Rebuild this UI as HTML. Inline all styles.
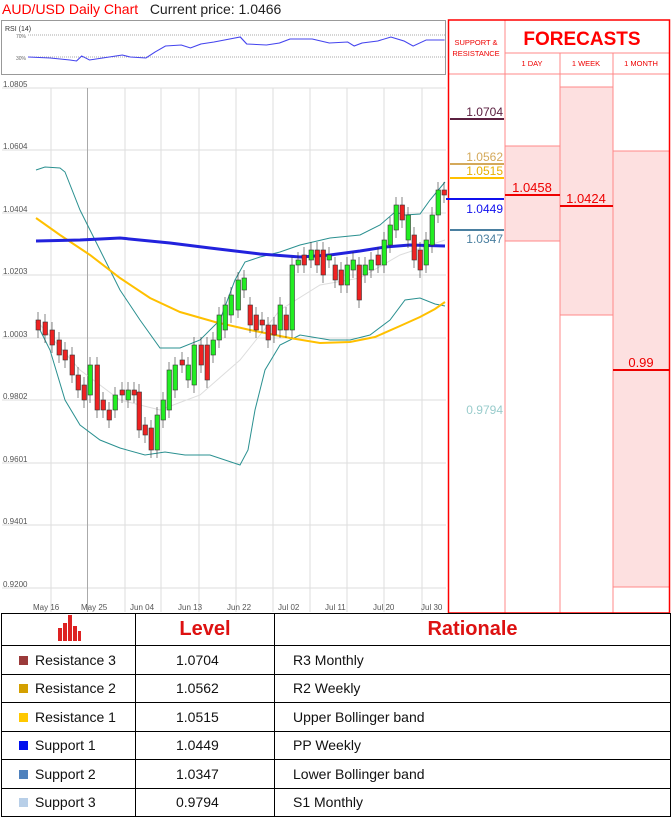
<!DOCTYPE html>
<html><head><meta charset="utf-8"><style>
body{margin:0;width:672px;height:821px;background:#fff;font-family:"Liberation Sans",sans-serif;position:relative;overflow:hidden}
.a{position:absolute}
table{border-collapse:collapse;position:absolute;left:1px;top:613px;width:670px}
td{border:1.5px solid #000;font-size:14px;height:27.5px;padding:0;color:#111}
.sq{display:inline-block;width:9px;height:9px;margin:0 7px 0 17px;vertical-align:-0px}
</style></head><body>
<div class="a" style="left:2px;top:1px;font-size:14px"><span style="color:#f00">AUD/USD Daily Chart</span>&nbsp;&nbsp;&nbsp;<span style="color:#222">Current price: <b style="font-weight:normal">1.0466</b></span></div>
<svg class="a" style="left:0;top:0" width="672" height="613">
<rect x="1.5" y="20.5" width="444" height="54" fill="#fff" stroke="#999"/>
<text x="5" y="31" font-size="7" fill="#333">RSI (14)</text>
<text x="16" y="38" font-size="5" fill="#666">70%</text><text x="16" y="60" font-size="5" fill="#666">30%</text>
<line x1="28" y1="35" x2="445" y2="35" stroke="#aaa" stroke-dasharray="1,1"/>
<line x1="28" y1="57" x2="445" y2="57" stroke="#aaa" stroke-dasharray="1,1"/>
<polyline fill="none" stroke="#44e" stroke-width="1" transform="translate(28 0) scale(1.31 1) translate(-28 0)" points="28,57 45,58 60,60 65,61 69,56 75,60 90,57 100,55 106,57 118,58 125,52 133,46 145,45 152,48 160,44 170,42 178,40 190,37 195,44 210,45 220,43 228,39 245,39 258,43 272,42 277,46 283,43 295,41 305,37 315,41 322,46 332,40 346,40"/>
<g stroke="#ddd" stroke-width="1">
<line x1="2" y1="88" x2="446" y2="88"/><line x1="2" y1="150" x2="446" y2="150"/><line x1="2" y1="213" x2="446" y2="213"/><line x1="2" y1="275" x2="446" y2="275"/><line x1="2" y1="338" x2="446" y2="338"/><line x1="2" y1="400" x2="446" y2="400"/><line x1="2" y1="463" x2="446" y2="463"/><line x1="2" y1="525" x2="446" y2="525"/><line x1="2" y1="588" x2="446" y2="588"/>
<line x1="51" y1="88" x2="51" y2="612"/><line x1="87.5" y1="88" x2="87.5" y2="612" stroke="#aaa"/><line x1="125" y1="88" x2="125" y2="612"/><line x1="161" y1="88" x2="161" y2="612"/><line x1="199" y1="88" x2="199" y2="612"/><line x1="236" y1="88" x2="236" y2="612"/><line x1="273" y1="88" x2="273" y2="612"/><line x1="310" y1="88" x2="310" y2="612"/><line x1="347" y1="88" x2="347" y2="612"/><line x1="384" y1="88" x2="384" y2="612"/><line x1="422" y1="88" x2="422" y2="612"/>
</g>
<g font-size="8" fill="#555"><text x="3" y="87">1.0805</text><text x="3" y="149">1.0604</text><text x="3" y="212">1.0404</text><text x="3" y="274">1.0203</text><text x="3" y="337">1.0003</text><text x="3" y="399">0.9802</text><text x="3" y="462">0.9601</text><text x="3" y="524">0.9401</text><text x="3" y="587">0.9200</text>
<text x="33" y="610">May 16</text><text x="81" y="610">May 25</text><text x="130" y="610">Jun 04</text><text x="178" y="610">Jun 13</text><text x="227" y="610">Jun 22</text><text x="278" y="610">Jul 02</text><text x="325" y="610">Jul 11</text><text x="373" y="610">Jul 20</text><text x="421" y="610">Jul 30</text></g>
<polyline fill="none" stroke="#ddd" points="36,320 80,370 120,400 160,410 200,395 240,360 280,310 320,285 360,278 400,255 445,240"/>
<polyline fill="none" stroke="#2a9090" points="36,170 45,167 60,168 65,172 80,210 100,250 120,290 140,320 160,348 180,348 200,340 220,320 235,280 245,262 260,257 280,252 300,245 330,238 360,235 380,225 395,212 405,215 420,214 430,200 445,182"/>
<polyline fill="none" stroke="#2a9090" points="36,322 50,350 65,400 80,425 100,440 120,448 145,455 165,452 185,455 210,455 240,465 248,450 255,410 265,370 280,345 300,335 330,340 350,340 370,335 390,320 405,300 420,298 435,304 445,306"/>
<polyline fill="none" stroke="#ffc000" stroke-width="2" points="36,218 60,235 90,255 120,278 150,298 180,312 215,322 250,330 290,338 320,343 350,342 375,337 400,326 420,317 435,309 445,302"/>
<polyline fill="none" stroke="#2222dd" stroke-width="3" points="36,241 80,240 120,238 170,243 210,248 260,254 300,257 330,255 360,251 385,247 410,245 445,246"/>
<g id="c" stroke="#333" stroke-width="0.6"></g>
<rect x="505" y="146" width="55" height="95" fill="#fde0e0"/>
<rect x="560" y="87" width="53" height="228" fill="#fde0e0"/>
<rect x="613" y="151" width="56" height="436" fill="#fde0e0"/>
<g stroke="#f88" stroke-width="1"><line x1="505" y1="146" x2="560" y2="146"/><line x1="505" y1="241" x2="560" y2="241"/><line x1="560" y1="87" x2="613" y2="87"/><line x1="560" y1="315" x2="613" y2="315"/><line x1="613" y1="151" x2="670" y2="151"/><line x1="613" y1="587" x2="670" y2="587"/>
<line x1="505" y1="53" x2="670" y2="53"/><line x1="448" y1="74" x2="670" y2="74"/><line x1="505" y1="20" x2="505" y2="613"/><line x1="560" y1="53" x2="560" y2="613"/><line x1="613" y1="53" x2="613" y2="613"/></g>
<g stroke="#f00" stroke-width="1.5" fill="none"><rect x="448.5" y="20" width="221" height="593"/></g>
<line x1="505" y1="195" x2="560" y2="195" stroke="#e00" stroke-width="2"/>
<line x1="560" y1="206" x2="613" y2="206" stroke="#e00" stroke-width="2"/>
<line x1="613" y1="370" x2="670" y2="370" stroke="#e00" stroke-width="2"/>
<g font-size="13" fill="#e00" text-anchor="middle"><text x="532" y="192">1.0458</text><text x="586" y="203">1.0424</text><text x="641" y="367">0.99</text></g>
<text x="582" y="45" font-size="19" font-weight="bold" fill="#f00" text-anchor="middle">FORECASTS</text>
<g font-size="7.5" fill="#e00" text-anchor="middle"><text x="476" y="45">SUPPORT &amp;</text><text x="476" y="56">RESISTANCE</text><text x="532" y="66">1 DAY</text><text x="586" y="66">1 WEEK</text><text x="641" y="66">1 MONTH</text></g>
<line x1="450" y1="119" x2="504" y2="119" stroke="#5b2040" stroke-width="2"/>
<line x1="450" y1="164" x2="504" y2="164" stroke="#d4a95a" stroke-width="2"/>
<line x1="450" y1="178" x2="504" y2="178" stroke="#ffc000" stroke-width="2"/>
<line x1="446" y1="199" x2="504" y2="199" stroke="#1010ee" stroke-width="2"/>
<line x1="450" y1="230" x2="504" y2="230" stroke="#4a7fa0" stroke-width="2"/>
<g font-size="12" text-anchor="end"><text x="503" y="116" fill="#5b2040">1.0704</text><text x="503" y="161" fill="#d4a95a">1.0562</text><text x="503" y="175" fill="#e8b000">1.0515</text><text x="503" y="213" fill="#1010ee">1.0449</text><text x="503" y="243" fill="#4a7fa0">1.0347</text><text x="503" y="414" fill="#9cc">0.9794</text></g>
</svg>
<script>
var d=[[36,320,330,0],[43,322,335,0],[50,330,345,0],[57,340,355,0],[63,350,360,0],[70,355,375,0],[76,375,390,0],[82,385,400,0],[88,365,395,1],[95,365,410,0],[101,400,410,0],[107,410,420,0],[113,395,410,1],[120,390,395,0],[126,390,400,1],[132,390,395,0],[137,392,430,0],[143,425,435,0],[149,428,450,0],[155,415,450,1],[161,400,420,1],[167,370,410,1],[173,365,390,1],[180,360,365,0],[186,365,380,1],[192,345,385,1],[199,345,365,0],[205,345,380,0],[211,340,355,1],[217,315,340,1],[223,305,330,1],[229,295,315,1],[236,280,310,1],[242,278,290,1],[248,305,325,0],[254,315,330,0],[260,320,325,0],[266,325,340,0],[272,325,335,0],[278,305,330,1],[284,315,330,0],[290,265,330,1],[296,260,265,1],[302,255,265,0],[309,250,260,1],[315,250,265,0],[321,250,275,0],[327,255,260,1],[333,265,280,0],[339,270,285,0],[345,265,285,1],[351,260,270,1],[357,265,300,0],[363,265,275,1],[369,260,270,1],[376,255,265,0],[382,240,265,1],[388,225,245,1],[394,205,230,1],[400,205,220,0],[406,215,240,1],[412,235,260,0],[418,250,270,0],[424,240,265,1],[430,215,245,1],[436,190,215,1],[442,190,195,0]];
var s='';d.forEach(function(c){s+='<line x1="'+(c[0]+2)+'" y1="'+(c[1]-8)+'" x2="'+(c[0]+2)+'" y2="'+(c[2]+8)+'"/><rect x="'+c[0]+'" y="'+c[1]+'" width="4.5" height="'+Math.max(2,c[2]-c[1])+'" fill="'+(c[3]?'#2e2':'#e22')+'"/>';});
document.getElementById('c').innerHTML=s;
</script>
<table>
<tr><td style="width:133px;height:31px;text-align:center"><svg width="24" height="28" viewBox="0 0 24 28"><g fill="#d22"><rect x="1" y="14" width="4" height="13"/><rect x="6" y="9" width="4" height="18"/><rect x="11" y="1" width="4" height="26"/><rect x="16" y="12" width="4" height="15"/><rect x="21" y="17" width="3" height="10"/></g></svg></td><td style="width:138px;text-align:center;font-size:20px;font-weight:bold;color:#d11">Level</td><td style="text-align:center;font-size:20px;font-weight:bold;color:#d11">Rationale</td></tr>
<tr><td><span class="sq" style="background:#9b3a3a"></span>Resistance 3</td><td style="padding-left:40px">1.0704</td><td style="padding-left:18px">R3 Monthly</td></tr>
<tr><td><span class="sq" style="background:#d4a000"></span>Resistance 2</td><td style="padding-left:40px">1.0562</td><td style="padding-left:18px">R2 Weekly</td></tr>
<tr><td><span class="sq" style="background:#ffc800"></span>Resistance 1</td><td style="padding-left:40px">1.0515</td><td style="padding-left:18px">Upper Bollinger band</td></tr>
<tr><td><span class="sq" style="background:#0010ee"></span>Support 1</td><td style="padding-left:40px">1.0449</td><td style="padding-left:18px">PP Weekly</td></tr>
<tr><td><span class="sq" style="background:#4f81bd"></span>Support 2</td><td style="padding-left:40px">1.0347</td><td style="padding-left:18px">Lower Bollinger band</td></tr>
<tr><td><span class="sq" style="background:#b8cfe8"></span>Support 3</td><td style="padding-left:40px">0.9794</td><td style="padding-left:18px">S1 Monthly</td></tr>
</table>
</body></html>
